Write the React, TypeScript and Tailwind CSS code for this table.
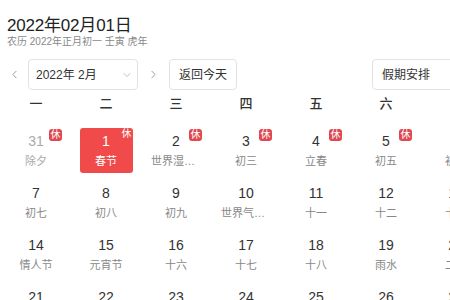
import { ChevronDown, ChevronLeft, ChevronRight } from "lucide-react";

type Day = { d: number; l: string; other?: boolean; rest?: boolean; sel?: boolean };

const weeks: Day[][] = [
  [
    { d: 31, l: "除夕", other: true, rest: true },
    { d: 1, l: "春节", rest: true, sel: true },
    { d: 2, l: "世界湿地日", rest: true },
    { d: 3, l: "初三", rest: true },
    { d: 4, l: "立春", rest: true },
    { d: 5, l: "初五", rest: true },
    { d: 6, l: "初六", rest: true },
  ],
  [
    { d: 7, l: "初七" },
    { d: 8, l: "初八" },
    { d: 9, l: "初九" },
    { d: 10, l: "世界气象日" },
    { d: 11, l: "十一" },
    { d: 12, l: "十二" },
    { d: 13, l: "十三" },
  ],
  [
    { d: 14, l: "情人节" },
    { d: 15, l: "元宵节" },
    { d: 16, l: "十六" },
    { d: 17, l: "十七" },
    { d: 18, l: "十八" },
    { d: 19, l: "雨水" },
    { d: 20, l: "二十" },
  ],
  [
    { d: 21, l: "廿一" },
    { d: 22, l: "廿二" },
    { d: 23, l: "廿三" },
    { d: 24, l: "廿四" },
    { d: 25, l: "廿五" },
    { d: 26, l: "廿六" },
    { d: 27, l: "廿七" },
  ],
];

const weekdays = ["一", "二", "三", "四", "五", "六", "日"];

function Cell({ day }: { day: Day }) {
  return (
    <div className="relative h-[52px]">
      <div
        className={
          "mx-auto w-[53px] h-[45px] rounded-[3px] flex flex-col items-center relative " +
          (day.sel ? "bg-[#f04a4a] text-white" : "")
        }
      >
        <div
          className={
            "mt-[4px] text-[14px] leading-[18px] " +
            (day.sel ? "text-white" : day.other ? "text-[#aaa]" : "text-[#333]")
          }
        >
          {day.d}
        </div>
        <div
          className={
            "mt-[4px] w-[50px] text-center text-[11px] leading-[14px] whitespace-nowrap overflow-hidden text-ellipsis " +
            (day.sel ? "text-white" : day.other ? "text-[#aaa]" : "text-[#888]")
          }
        >
          {day.l}
        </div>
        {day.sel && day.rest && (
          <span className="absolute top-0 right-[1px] text-[10px] leading-[12px] text-white">休</span>
        )}
      </div>
      {!day.sel && day.rest && (
        <span className="absolute top-[1px] left-[48px] w-[13px] h-[12px] rounded-[3px] bg-[#e0474f] text-white text-[10px] leading-[12px] text-center">
          休
        </span>
      )}
    </div>
  );
}

export default function App() {
  return (
    <div
      className="w-[450px] h-[300px] overflow-hidden bg-white"
      style={{ fontFamily: '"Liberation Sans", "Noto Sans CJK SC", sans-serif' }}
    >
      <div className="pl-[7px] pt-[16px]">
        <div className="text-[17px] leading-[20px] text-[#222] tracking-[-0.2px]">2022年02月01日</div>
        <div className="text-[10px] leading-[12px] text-[#888]">农历 2022年正月初一 壬寅 虎年</div>
      </div>

      <div className="mt-[11px] flex items-center h-[31px]">
        <div className="w-[28px] shrink-0 flex justify-center text-[#888]">
          <ChevronLeft size={13} strokeWidth={1.5} />
        </div>
        <div className="w-[110px] shrink-0 h-[31px] border border-[#e2e2e2] rounded-[4px] flex items-center justify-between pl-[7px] pr-[4px]">
          <span className="text-[12px] text-[#333]">2022年 2月</span>
          <ChevronDown size={12} strokeWidth={1.5} className="text-[#aaa]" />
        </div>
        <div className="w-[30px] shrink-0 flex justify-center text-[#888]">
          <ChevronRight size={13} strokeWidth={1.5} />
        </div>
        <div className="ml-[1px] w-[68px] shrink-0 h-[31px] border border-[#e2e2e2] rounded-[4px] flex items-center justify-center text-[12px] text-[#333]">
          返回今天
        </div>
        <div className="ml-[135px] w-[110px] shrink-0 h-[31px] border border-[#e2e2e2] rounded-[4px] flex items-center pl-[9px] text-[12px] text-[#333]">
          假期安排
        </div>
      </div>

      <div className="ml-[1px] mt-[2px] grid grid-cols-[repeat(7,70px)]">
        {weekdays.map((w) => (
          <div key={w} className="h-[24px] flex items-center justify-center text-[13px] font-medium text-[#333]">
            {w}
          </div>
        ))}
      </div>

      <div className="ml-[1px] mt-[12px] grid grid-cols-[repeat(7,70px)]">
        {weeks.flat().map((day, i) => (
          <Cell key={i} day={day} />
        ))}
      </div>
    </div>
  );
}
